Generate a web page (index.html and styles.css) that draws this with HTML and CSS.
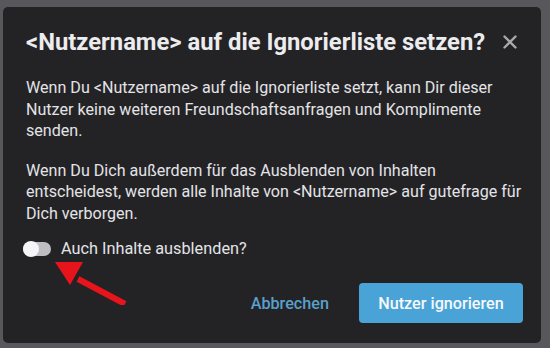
FILE: index.html
```html
<!DOCTYPE html>
<html lang="de">
<head>
    <meta charset="UTF-8">
    <meta name="viewport" content="width=device-width, initial-scale=1.0">
    <title>Nutzer ignorieren</title>
    <link rel="stylesheet" href="styles.css">
</head>
<body>
    <div class="dialog">
        <div class="dialog-header">
            <h2>&lt;Nutzername&gt; auf die Ignorierliste setzen?</h2>
            <button class="close" aria-label="Schließen">
                <svg width="14" height="14" viewBox="0 0 14 14">
                    <path d="M1.5 1.5 L12.5 12.5 M12.5 1.5 L1.5 12.5" stroke="#a9a9ad" stroke-width="2.4" stroke-linecap="round"/>
                </svg>
            </button>
        </div>
        <p>Wenn Du &lt;Nutzername&gt; auf die Ignorierliste setzt, kann Dir dieser Nutzer keine weiteren Freundschaftsanfragen und Komplimente senden.</p>
        <p class="second">Wenn Du Dich außerdem für das Ausblenden von Inhalten entscheidest, werden alle Inhalte von &lt;Nutzername&gt; auf gutefrage für Dich verborgen.</p>
        <label class="toggle-row">
            <span class="toggle"><span class="knob"></span></span>
            Auch Inhalte ausblenden?
        </label>
        <div class="actions">
            <button class="btn-link">Abbrechen</button>
            <button class="btn-primary">Nutzer ignorieren</button>
        </div>

        <!-- red annotation arrow -->
        <svg class="arrow" width="80" height="44" viewBox="0 0 80 44">
            <line x1="71" y1="43" x2="24" y2="18" stroke="#e8141b" stroke-width="6"/>
            <polygon points="1,1 29,1 16,24" fill="#e8141b"/>
        </svg>
    </div>
</body>
</html>
```
FILE: styles.css
```css
body {
    font-family: Roboto, 'Liberation Sans', Arial, sans-serif;
    background-color: #58585c;
    margin: 0;
    padding: 7px 9px 5px 3px;
}
.dialog {
    position: relative;
    background-color: #232326;
    border-radius: 5px;
    height: 336px;
    box-sizing: border-box;
    padding: 21px 18px 0 20px;
    color: #e4e4e6;
}
.dialog-header {
    display: flex;
    justify-content: space-between;
    align-items: center;
}
h2 {
    font-size: 23.8px;
    font-weight: 700;
    margin: 0;
    line-height: 28px;
    color: #ececee;
    padding-left: 3px;
}
.close {
    background: none;
    border: none;
    padding: 0;
    margin-right: 6px;
    cursor: pointer;
    display: flex;
}
p {
    font-size: 16.1px;
    line-height: 21.5px;
    margin: 21px -4px 0 3px;
}
p.second {
    margin-top: 18px;
}
.toggle-row {
    display: flex;
    align-items: center;
    gap: 10px;
    font-size: 16.3px;
    line-height: 20px;
    margin: 15px 0 0 0;
}
.toggle {
    width: 28px;
    height: 14px;
    border-radius: 7px;
    background-color: #bdbdc2;
    display: inline-block;
    position: relative;
}
.knob {
    position: absolute;
    left: 0;
    top: -1px;
    width: 16px;
    height: 16px;
    border-radius: 50%;
    background-color: #f5f5f7;
}
.actions {
    display: flex;
    justify-content: flex-end;
    align-items: center;
    gap: 30px;
    margin-top: 24px;
}
.btn-link {
    background: none;
    border: none;
    color: #5aa0cc;
    font-family: inherit;
    font-size: 16.2px;
    font-weight: 500;
    padding: 0;
    cursor: pointer;
}
.btn-primary {
    background-color: #4aa3d6;
    color: #f4f8fb;
    border: none;
    border-radius: 4px;
    font-family: inherit;
    font-size: 16.2px;
    font-weight: 500;
    width: 164px;
    height: 40px;
    cursor: pointer;
}
.arrow {
    position: absolute;
    left: 51px;
    top: 254px;
}
```
